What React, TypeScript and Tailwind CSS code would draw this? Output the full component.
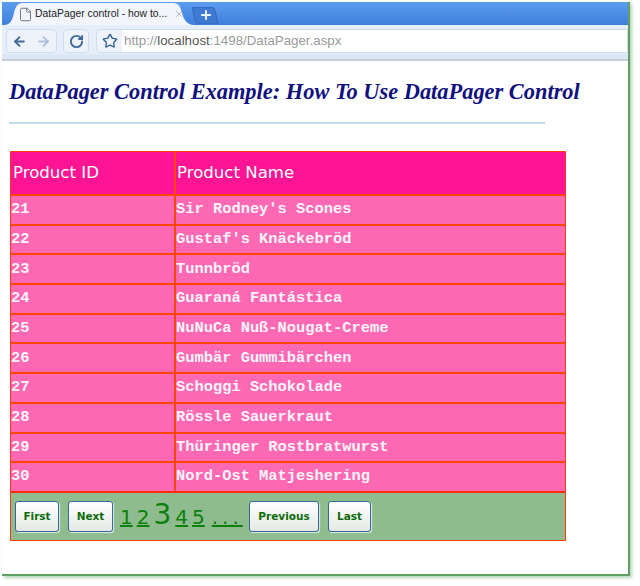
import { ArrowLeft, ArrowRight, File, Plus, RotateCw, Star, X } from 'lucide-react';

const rows: [string, string][] = [
  ['21', "Sir Rodney's Scones"],
  ['22', "Gustaf's Knäckebröd"],
  ['23', 'Tunnbröd'],
  ['24', 'Guaraná Fantástica'],
  ['25', 'NuNuCa Nuß-Nougat-Creme'],
  ['26', 'Gumbär Gummibärchen'],
  ['27', 'Schoggi Schokolade'],
  ['28', 'Rössle Sauerkraut'],
  ['29', 'Thüringer Rostbratwurst'],
  ['30', 'Nord-Ost Matjeshering'],
];

function PagerButton({ label, width }: { label: string; width: string }) {
  return (
    <button
      className={`${width} h-[31px] shrink-0 rounded-[3px] border border-[#35689c] bg-gradient-to-b from-white to-[#e4e8e4] text-center font-['DejaVu_Sans'] text-[10.5px] font-bold text-[#0b6b0b] shadow-[1px_1px_1px_rgba(255,255,255,0.7)]`}
    >
      {label}
    </button>
  );
}

function Chrome() {
  return (
    <div className="shrink-0">
      <div className="relative flex h-[23px] items-end bg-gradient-to-b from-[#5c9df0] to-[#3f7fdc]">
        <svg className="absolute left-[2px] top-[1px]" width="190" height="22" viewBox="0 0 190 22">
          <path d="M0 22C6 22 8 18 10 10C12 2 14 0 20 0H168C174 0 176 2 178 10C180 18 184 22 190 22Z" fill="#f2f6fc" />
        </svg>
        <svg className="absolute left-[190px] top-[5px]" width="26" height="17" viewBox="0 0 26 17">
          <path d="M0 0H19C22 0 23 2 24 8C25 13 26 17 26 17H7C4 17 3 14 2 9C1 4 0 0 0 0Z" fill="#3f7ad2" stroke="#2f63b4" />
        </svg>
        <Plus className="absolute left-[197px] top-[6px] text-[#e8f0fc]" size={14} strokeWidth={3.5} />
        <div className="relative flex h-[22px] w-[188px] items-center pl-[16px]">
          <File size={15} strokeWidth={1.4} className="shrink-0 text-[#666]" />
          <span className="ml-[2px] font-['Liberation_Sans'] text-[10.4px] whitespace-nowrap text-[#222]">
            DataPager control - how to...
          </span>
          <X size={10} strokeWidth={2.2} className="ml-[7px] shrink-0 text-[#a8b0b8]" />
        </div>
      </div>
      <div className="flex h-[29px] items-center bg-[#e6eefa] pl-[4px] pt-[3px]">
        <div className="flex h-[24px] w-[51px] items-center justify-center gap-[9px] rounded-[4px] border border-[#cfdcf0] bg-[#eef3fb]">
          <ArrowLeft size={15} strokeWidth={3} className="text-[#3f6a9c]" />
          <ArrowRight size={15} strokeWidth={3} className="text-[#aebfe0]" />
        </div>
        <div className="ml-[6px] flex h-[24px] w-[26px] items-center justify-center rounded-[4px] border border-[#cfdcf0] bg-[#eef3fb]">
          <RotateCw size={15} strokeWidth={3} className="text-[#3f6a9c]" />
        </div>
        <div className="ml-[7px] flex h-[24px] flex-1 items-center rounded-l-[4px] border border-[#cfdcf0] bg-[#eef3fb]">
          <div className="flex w-[25px] justify-center">
            <Star size={16} strokeWidth={2} className="text-[#2f5f95]" />
          </div>
          <div className="flex h-full flex-1 items-center bg-white pl-[2px] font-['Liberation_Sans'] text-[13.3px] text-[#9a9a9a]">
            http://<span className="text-[#555]">localhost</span>:1498/DataPager.aspx
          </div>
        </div>
      </div>
      <div className="h-[7px] border-b-2 border-[#c8ced8] bg-[#dce6f5]" />
    </div>
  );
}

export default function App() {
  return (
    <div className="h-[586px] w-[640px] overflow-hidden bg-white pl-[2px] pt-[2px]">
      <div className="flex h-[574px] w-[628px] flex-col border-r-[2px] border-b-[2px] border-[#5f9f62] shadow-[2px_2px_3px_rgba(95,159,98,0.45)]">
        <Chrome />
        <div className="pl-[7px]">
          <h1 className="pt-[18px] font-['Liberation_Serif'] text-[22.4px] leading-[26px] font-bold whitespace-nowrap text-[#10107f] italic">
            DataPager Control Example: How To Use DataPager Control
          </h1>
          <div className="mt-[17px] h-[2px] w-[536px] bg-[#c5dbe6]" />

          <div className="mt-[27px] ml-[1px] w-[556px] border-[1.5px] border-[#ff3a10]">
            <div className="flex h-[42px] items-center bg-[#ff1493] font-['DejaVu_Sans'] text-[16.6px] text-white">
              <div className="flex h-full w-[165px] items-center border-r-2 border-[#ff4500] pl-[2px]">Product ID</div>
              <div className="pl-[1px]">Product Name</div>
            </div>
            {rows.map(([id, name]) => (
              <div
                key={id}
                className="flex h-[29.7px] items-center border-t-2 border-[#ff4500] bg-[#ff69b4] font-['Liberation_Mono'] text-[15.4px] font-bold whitespace-nowrap text-[#fff4fa]"
              >
                <div className="flex h-full w-[165px] items-center border-r-2 border-[#ff4500]">{id}</div>
                <div>{name}</div>
              </div>
            ))}
            <div className="flex h-[49px] items-center border-t-2 border-[#ff2a10] bg-[#8fbc8f] pl-[4px] font-['DejaVu_Sans'] text-[#0b800b]">
              <PagerButton label="First" width="w-[44px]" />
              <div className="w-[9px]" />
              <PagerButton label="Next" width="w-[45px]" />
              <div className="ml-[7px] flex w-[122px] items-baseline gap-[4px] text-[20px]">
                <a className="underline">1</a>
                <a className="underline">2</a>
                <span className="text-[28px] leading-[28px]">3</span>
                <a className="underline">4</a>
                <a className="underline">5</a>
                <a className="ml-[3px] tracking-[4px] underline">...</a>
              </div>
              <div className="ml-[7px]" />
              <PagerButton label="Previous" width="w-[70px]" />
              <div className="w-[9px]" />
              <PagerButton label="Last" width="w-[43px]" />
            </div>
          </div>
        </div>
      </div>
    </div>
  );
}
